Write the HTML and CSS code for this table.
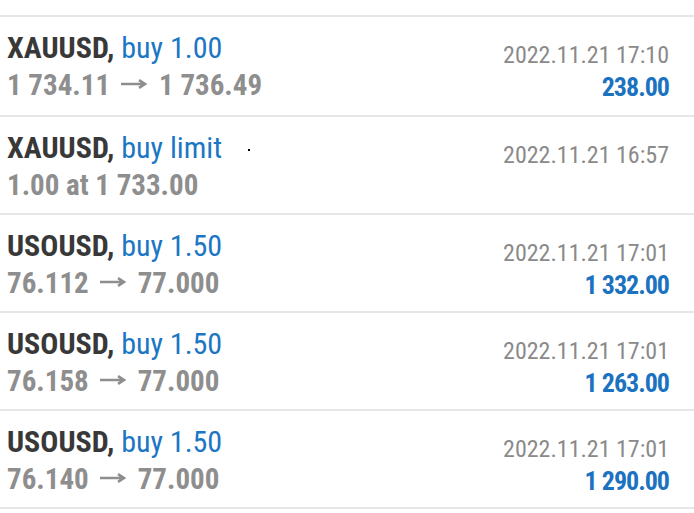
FILE: index.html
```html
<!DOCTYPE html>
<html>
<head>
<meta charset="utf-8">
<link rel="stylesheet" href="styles.css">
</head>
<body>
<div class="list">
  <div class="row first">
    <div class="line top">
      <div class="title"><span class="sym">XAUUSD,</span> <span class="type">buy 1.00</span></div>
      <div class="date">2022.11.21 17:10</div>
    </div>
    <div class="line bottom">
      <div class="price">1 734.11<svg class="arrow" viewBox="0 0 26 10" width="26" height="10"><path d="M0 5H23M18 1.2L24 5L18 8.8" fill="none" stroke="#8e8e8e" stroke-width="2.6"/></svg>1 736.49</div>
      <div class="profit">238.00</div>
    </div>
  </div>
  <div class="row">
    <div class="line top">
      <div class="title"><span class="sym">XAUUSD,</span> <span class="type">buy limit</span><span class="speck"></span></div>
      <div class="date">2022.11.21 16:57</div>
    </div>
    <div class="line bottom">
      <div class="price">1.00 at 1 733.00</div>
      <div class="profit"></div>
    </div>
  </div>
  <div class="row">
    <div class="line top">
      <div class="title"><span class="sym">USOUSD,</span> <span class="type">buy 1.50</span></div>
      <div class="date">2022.11.21 17:01</div>
    </div>
    <div class="line bottom">
      <div class="price">76.112<svg class="arrow" viewBox="0 0 26 10" width="26" height="10"><path d="M0 5H23M18 1.2L24 5L18 8.8" fill="none" stroke="#8e8e8e" stroke-width="2.6"/></svg>77.000</div>
      <div class="profit">1 332.00</div>
    </div>
  </div>
  <div class="row">
    <div class="line top">
      <div class="title"><span class="sym">USOUSD,</span> <span class="type">buy 1.50</span></div>
      <div class="date">2022.11.21 17:01</div>
    </div>
    <div class="line bottom">
      <div class="price">76.158<svg class="arrow" viewBox="0 0 26 10" width="26" height="10"><path d="M0 5H23M18 1.2L24 5L18 8.8" fill="none" stroke="#8e8e8e" stroke-width="2.6"/></svg>77.000</div>
      <div class="profit">1 263.00</div>
    </div>
  </div>
  <div class="row">
    <div class="line top">
      <div class="title"><span class="sym">USOUSD,</span> <span class="type">buy 1.50</span></div>
      <div class="date">2022.11.21 17:01</div>
    </div>
    <div class="line bottom">
      <div class="price">76.140<svg class="arrow" viewBox="0 0 26 10" width="26" height="10"><path d="M0 5H23M18 1.2L24 5L18 8.8" fill="none" stroke="#8e8e8e" stroke-width="2.6"/></svg>77.000</div>
      <div class="profit">1 290.00</div>
    </div>
  </div>
</div>
</body>
</html>
```
FILE: styles.css
```css
html, body {
  margin: 0;
  padding: 0;
  background: #ffffff;
}
body {
  font-family: "Roboto Condensed", Roboto, "Liberation Sans", sans-serif;
  font-stretch: condensed;
}
.list {
  padding-top: 15px;
}
.row {
  border-top: 2px solid #e6e6e6;
  height: 96px;
  padding: 0 25px 0 7px;
  display: flex;
  flex-direction: column;
}
.row.first {
  height: 98px;
}
.row:last-child {
  border-bottom: 2px solid #e6e6e6;
}
.line {
  display: flex;
  justify-content: space-between;
  align-items: flex-start;
  white-space: nowrap;
}
.line.top {
  height: 46px;
}
.title {
  font-size: 30px;
  line-height: 30px;
  margin-top: 16px;
  position: relative;
}
.sym {
  color: #383838;
  font-weight: 700;
}
.type {
  color: #1b76c4;
}
.speck {
  position: absolute;
  left: 241px;
  top: 16px;
  width: 2px;
  height: 2px;
  background: #000;
}
.date {
  font-size: 24px;
  line-height: 24px;
  margin-top: 26px;
  color: #8a8a8a;
}
.price {
  font-size: 29px;
  line-height: 30px;
  margin-top: 7px;
  font-weight: 700;
  color: #8e8e8e;
}
.arrow {
  display: inline-block;
  vertical-align: 6px;
  margin: 0 12px 0 11px;
}
.profit {
  font-size: 26px;
  line-height: 26px;
  margin-top: 11px;
  font-weight: 700;
  letter-spacing: -1px;
  color: #1b72c0;
}
```
